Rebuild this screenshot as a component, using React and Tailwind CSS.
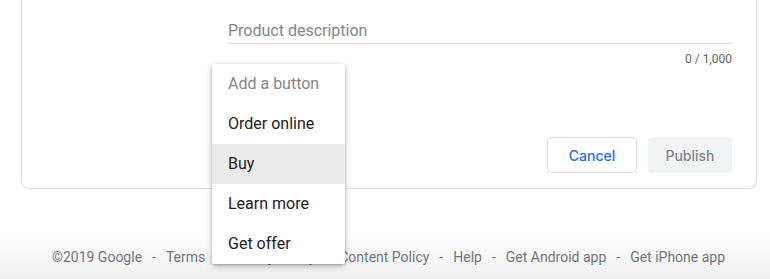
const MENU_ITEMS = ['Order online', 'Buy', 'Learn more', 'Get offer']

const FOOTER_LINKS = [
  '©2019 Google',
  'Terms',
  'Privacy Policy',
  'Content Policy',
  'Help',
  'Get Android app',
  'Get iPhone app',
]

function ButtonMenu({ active = 'Buy' }) {
  return (
    <div className="absolute left-[212px] top-[64px] w-[133px] bg-white rounded-[2px] shadow-[0_2px_6px_rgba(0,0,0,0.28),0_1px_2px_rgba(0,0,0,0.18)] z-10">
      <div className="h-10 flex items-center pl-4 text-[16px] text-[#80868b]">Add a button</div>
      {MENU_ITEMS.map(item => (
        <div
          key={item}
          className={`h-10 flex items-center pl-4 text-[16px] text-[#202124] ${item === active ? 'bg-[#ebebeb]' : ''}`}
        >
          {item}
        </div>
      ))}
    </div>
  )
}

export default function App() {
  return (
    <div className="relative w-[770px] h-[279px] overflow-hidden bg-white font-['Roboto','Liberation_Sans',sans-serif]">
      <div className="pl-[21px] pr-[13px]">
        <div className="border-x border-b border-[#dadce0] rounded-b-lg pl-[206px] pr-[24px] pt-[19px] pb-[15px]">
          <div className="h-[25px] border-b border-[#dadce0] text-[16px] leading-6 text-[#80868b]">
            Product description
          </div>
          <div className="mt-[7px] text-right text-[12px] leading-4 text-[#5f6368]">0 / 1,000</div>
          <div className="mt-[70px] flex justify-end gap-[11px] font-['Inter','Roboto',sans-serif] text-[14px] font-medium">
            <button className="h-9 w-[90px] rounded border border-[#dadce0] text-[#1a73e8]">Cancel</button>
            <button className="h-9 w-[84px] rounded bg-[#f1f3f4] text-[#80868b]">Publish</button>
          </div>
        </div>
      </div>

      <div className="h-[90px] bg-gradient-to-b from-white from-50% to-[#f0f0f0] flex items-end justify-center pl-[7px] pb-[12px]">
        <div className="flex items-center text-[14px] leading-5 text-[#70757a]">
          {FOOTER_LINKS.map((l, i) => (
            <span key={l} className="flex items-center">
              {i > 0 && <span className="px-[10px]">-</span>}
              {l}
            </span>
          ))}
        </div>
      </div>

      <ButtonMenu />
    </div>
  )
}
